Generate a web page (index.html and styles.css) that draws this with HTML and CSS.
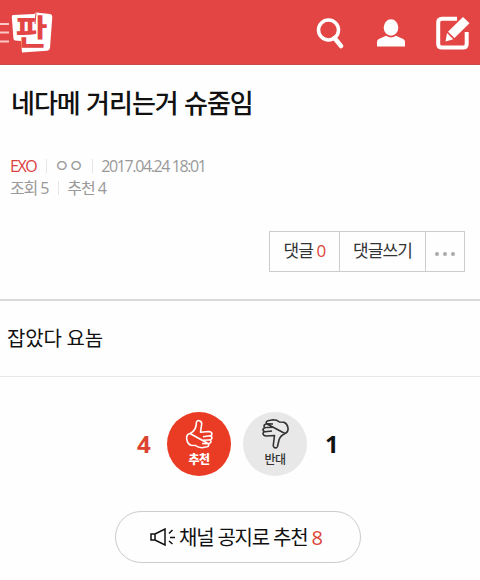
FILE: index.html
```html
<!DOCTYPE html>
<html lang="ko">
  <head>
    <meta charset="utf-8">
    <title>판</title>
    <link rel="stylesheet" href="styles.css">
  </head>
  <body>
    <!-- header -->
    <div id="header">
      <a href="#" class="logo">
        <svg width="56" height="65" viewBox="0 0 56 65">
          <path d="M0 24H9M0 32.500H9M0 41.500H9" stroke="#fbc9c5" stroke-width="2"/>
          <path d="M13 15L34 14L36 12.500L50 14Q52.500 14.500 52.300 17L50 48Q49.500 50.500 47 50.700L22 52.500L21 41L15 40.500Q13.500 40 13.400 38L11.800 17Q11.700 15.200 13 15Z" fill="#fff"/>
          <path d="M36 13L35 24" stroke="#e34545" stroke-width="1"/>
          <text class="logo_txt" x="15.500" y="44.500">판</text>
        </svg>
      </a>
      <div class="gnb">
        <a href="#"><svg width="28" height="32" viewBox="0 0 28 32"><circle cx="12.500" cy="13" r="10" fill="none" stroke="#fff" stroke-width="3.500"/><path d="M18.500 21L25 29" stroke="#fff" stroke-width="4.500" stroke-linecap="round"/></svg></a>
        <a href="#"><svg width="28" height="28" viewBox="0 0 28 28"><ellipse cx="14" cy="8.500" rx="7.300" ry="8.300" fill="#fff"/><path d="M0 27.500V23Q0 20.500 3 19.500L9 16.800Q14 20 19 16.800L25 19.500Q28 20.500 28 23V27.500Z" fill="#fff"/></svg></a>
        <a href="#"><svg width="34" height="34" viewBox="0 0 34 34"><path d="M21 2.700H6Q2.200 2.700 2.200 6.500V28Q2.200 31.500 6 31.500H27Q30.700 31.500 30.700 28V16" fill="none" stroke="#fff" stroke-width="4"/><path d="M27 1L33.500 7.300L18.500 22L12 15.700ZM11 17L17.300 23.300L9.500 25.500Z" fill="#fff"/></svg></a>
      </div>
    </div>

    <!-- title -->
    <div class="view_tit">
      <h1>네다메 거리는거 슈줌임</h1>
      <p class="info"><span class="cate">EXO</span><i></i><span class="nick">ㅇㅇ</span><i></i><span class="date">2017.04.24 18:01</span></p>
      <p class="info second"><span class="hit">조회 5</span><i></i><span class="rec">추천 4</span></p>
      <div class="btns">
        <a href="#" class="cmt">댓글 <em>0</em></a>
        <a href="#" class="write">댓글쓰기</a>
        <a href="#" class="more"><b></b><b></b><b></b></a>
      </div>
    </div>

    <!-- contents -->
    <div class="view_con">잡았다 요놈</div>

    <div class="vote">
      <span class="num up">4</span>
      <a href="#" class="circle good">
        <svg width="30" height="30" viewBox="0 0 30 30"><path d="M6 14.500Q11 12 12 7L12.500 3Q13.500 1 15.500 1.700Q18 2.500 17.700 5L16.500 13.200L24.500 12.500Q28 12.700 28 15Q28 16.500 26 16.800L19 17.700M26 16.800Q29 18 27.500 20Q26.500 21 24.500 21L18.500 21.200M26 20.800Q28 22.500 26 24Q25 24.800 23 24.700L18 24.500M24.500 24.700Q25.500 27 23 27.800L18 28.700Q14 28.700 11.500 26.500L7 26.200Q3.500 25 2.700 20Q2 15.500 6 14.500Z"/></svg>
        <span>추천</span>
      </a>
      <a href="#" class="circle bad">
        <svg width="30" height="30" viewBox="0 0 30 30"><path d="M25 14.500Q20 17 19 21L17.500 27.500Q16.500 29.500 14.700 28.700Q13 28 13.300 26L14.500 16.500L6.500 17Q3 16.800 3 14.500Q3 13 5 12.700L12 12M5 12.700Q2 11.500 3.500 9.500Q4.500 8.500 6.500 8.500L12.500 8.300M5 8.700Q3 7 5 5.500Q6 4.700 8 4.800L13 5M6.500 4.800Q5.500 2.500 8 1.700L13 .8Q17 .8 19.500 3L24 3.300Q27.500 5 28 9Q28.500 13.500 25 14.500Z"/></svg>
        <span>반대</span>
      </a>
      <span class="num down">1</span>
    </div>

    <a href="#" class="channel">
      <svg width="26" height="18" viewBox="0 0 26 18"><path d="M1 6H5V12H1ZM5 6L15 1V17L5 12M19 5.500L22.500 2M20 9.500H25M19 13L22.500 16" fill="none" stroke="#111" stroke-width="1.500"/></svg>
      <span>채널 공지로 추천 <em>8</em></span>
    </a>
  </body>
</html>
```

FILE: styles.css
```css
* {
  margin: 0;
  padding: 0;
  box-sizing: border-box;
}
body {
  height: 580px;
  overflow: hidden;
  background: #fefefe;
  color: #111;
  font-family: "Open Sans", "Noto Sans CJK KR", sans-serif;
}
a { color: inherit; text-decoration: none; }
em { font-style: normal; color: #dc4437; }
svg { display: block; }

/* header */
#header {
  display: flex;
  justify-content: space-between;
  height: 65px;
  background: #e34545;
  border-bottom: 1px solid #c94b49;
}
.logo_txt {
  font: 700 35px "Noto Sans CJK KR", sans-serif;
  fill: #e34545;
}
.gnb {
  display: flex;
  align-items: center;
  padding: 2px 10px 0 0;
}
.gnb a { margin-left: 32px; }
.gnb a:first-child { margin-right: 1px; }
.gnb a:last-child { margin-left: 31px; }

/* title */
.view_tit {
  height: 236px;
  padding: 17px 15px 0 11px;
  border-bottom: 2px solid #d9d9d9;
}
h1 {
  height: 40px;
  line-height: 40px;
  font-family: "Noto Sans CJK KR", sans-serif;
  font-size: 26px;
  font-weight: 500;
  letter-spacing: -1px;
  white-space: nowrap;
}
.info {
  display: flex;
  align-items: center;
  height: 22px;
  margin: 33px 0 0 -1px;
  line-height: 22px;
  font-size: 16px;
  letter-spacing: -1.1px;
  color: #999;
}
.info.second { margin-top: 0; }
.info i {
  width: 1px;
  height: 14px;
  margin: 0 8px 0 10px;
  background: #e6e6e6;
}
.info .cate { color: #dc4040; }
.info .cate { letter-spacing: -1.5px; }
.info .date { letter-spacing: -1.4px; }
.info .nick { margin-left: -1px; font-size: 17px; letter-spacing: -1.5px; }
.btns {
  display: flex;
  width: 196px;
  height: 41px;
  margin: 32px 0 0 auto;
  border: 1px solid #ccc;
  line-height: 37px;
  font-size: 17px;
  letter-spacing: -0.9px;
  color: #333;
}
.btns a { text-align: center; white-space: nowrap; }
.btns a + a { border-left: 1px solid #ccc; }
.btns .cmt { width: 69px; }
.btns .write { width: 86px; }
.btns .more {
  display: flex;
  flex: 1;
  align-items: center;
  justify-content: center;
  gap: 4px;
  padding-top: 4px;
}
.more b {
  width: 4px;
  height: 4px;
  border-radius: 50%;
  background: #aaa;
}

/* contents */
.view_con {
  height: 76px;
  padding-left: 7px;
  border-bottom: 1px solid #e8e8e8;
  line-height: 75px;
  font-size: 20px;
  letter-spacing: -0.2px;
}
.vote {
  display: flex;
  align-items: center;
  justify-content: center;
  height: 64px;
  margin: 35px 5px 0 0;
}
.num {
  width: 13px;
  font-size: 24px;
  font-weight: 700;
  line-height: 32px;
}
.up { margin-right: 17px; color: #dc4431; }
.down { margin-left: 18px; }
.circle {
  width: 64px;
  height: 64px;
  padding-top: 7px;
  border-radius: 50%;
  text-align: center;
}
.circle svg {
  margin: 0 auto;
  fill: none;
  stroke: currentColor;
  stroke-width: 1.600;
  stroke-linejoin: round;
}
.circle span {
  display: block;
  margin-top: 4px;
  line-height: 14px;
  font-size: 12px;
  letter-spacing: -0.5px;
}
.good { background: #ea3c25; color: #fff; }
.good span { font-weight: 900; }
.bad { margin-left: 12px; background: #e8e8e8; color: #333; }
.bad span { font-weight: 500; }

.channel {
  display: flex;
  align-items: center;
  width: 246px;
  height: 52px;
  margin: 35px 0 0 115px;
  padding-left: 34px;
  border: 1px solid #ccc;
  border-radius: 26px;
  font-size: 20px;
  letter-spacing: -1.2px;
  white-space: nowrap;
}
.channel span { margin: -2px 0 0 3px; }
```
